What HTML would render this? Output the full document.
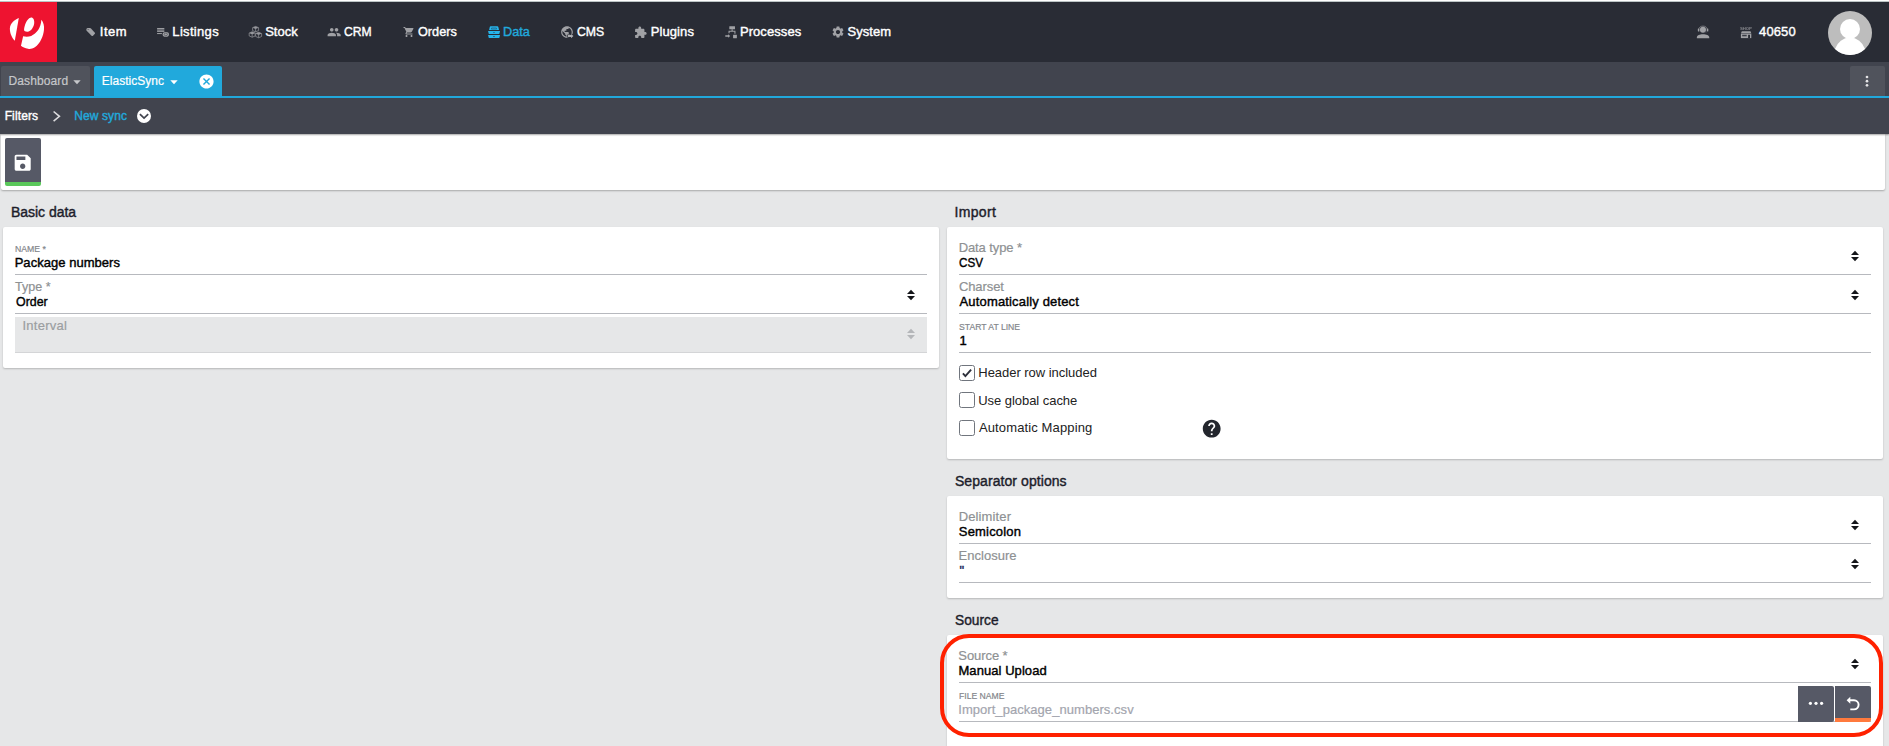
<!DOCTYPE html>
<html lang="en">
<head>
<meta charset="utf-8">
<title>ElasticSync</title>
<style>
*{box-sizing:border-box;margin:0;padding:0}
html,body{width:1889px;height:746px;overflow:hidden}
body{background:#e6e7e8;font-family:"Liberation Sans",sans-serif;color:#000;position:relative;font-size:13px}
.abs,.t,svg{position:absolute}
.t{white-space:nowrap;line-height:20px;height:20px}
#topstrip{left:0;top:0;width:1889px;height:2px;background:linear-gradient(#fff 0,#fff 50%,#bcc4c5 50%,#bcc4c5 100%)}
#header{left:0;top:2px;width:1889px;height:60px;background:#292c35}
#logo{left:0;top:2px;width:57px;height:60px;background:#ee1330}
#tabbar{left:0;top:62px;width:1889px;height:36px;background:#41444e}
#blueline{left:0;top:96px;width:1889px;height:2px;background:#21a9dc}
.tab{top:66px;height:30px;border-radius:2px 2px 0 0}
#crumbs{left:0;top:98px;width:1889px;height:35.5px;background:#41444e;box-shadow:0 1px 1.5px rgba(0,0,0,.35)}
#toolbar{left:1px;top:134px;width:1884px;height:56px;background:#fff;box-shadow:0 1px 2px rgba(0,0,0,.28);border-radius:0 0 2px 2px}
.card{background:#fff;border-radius:2px;box-shadow:0 1px 2px rgba(0,0,0,.21)}
.line{height:1px;background:#b7b9be}
.cb{width:16px;height:16px;border:1px solid #70757d;border-radius:2.5px;background:#fff}
.btn{background:#565966;border-radius:2px}
</style>
</head>
<body>
<div class="abs" id="header"></div>
<div class="abs" id="topstrip"></div>
<div class="abs" id="logo"></div>
<div class="abs" id="tabbar"></div>
<div class="abs tab" style="left:1px;width:89px;background:#50535c"></div>
<div class="abs tab" style="left:94px;width:128px;background:#21a9dc"></div>
<div class="abs tab" style="left:1850px;width:35px;background:#50535c"></div>
<div class="abs" id="blueline"></div>
<div class="abs" id="toolbar"></div>
<div class="abs" id="crumbs"></div>
<div class="abs btn" id="savebtn" style="left:5px;top:138px;width:36px;height:48px;border-bottom:4px solid #5ac85a"></div>

<div class="abs card" style="left:3px;top:227px;width:936px;height:141px"></div>
<div class="abs line" style="left:15px;top:274px;width:912px"></div>
<div class="abs line" style="left:15px;top:313px;width:912px"></div>
<div class="abs" style="left:15px;top:317px;width:912px;height:36px;background:#e6e7e8;border-bottom:1px solid #d4d5d7"></div>

<div class="abs card" style="left:947px;top:227px;width:936px;height:232px"></div>
<div class="abs line" style="left:959px;top:274px;width:912px"></div>
<div class="abs line" style="left:959px;top:313px;width:912px"></div>
<div class="abs line" style="left:959px;top:352px;width:912px"></div>
<div class="abs cb" style="left:959px;top:365px"></div>
<div class="abs cb" style="left:959px;top:392px"></div>
<div class="abs cb" style="left:959px;top:420px"></div>

<div class="abs card" style="left:947px;top:496px;width:936px;height:102px"></div>
<div class="abs line" style="left:959px;top:543px;width:912px"></div>
<div class="abs line" style="left:959px;top:582px;width:912px"></div>

<div class="abs card" style="left:947px;top:635px;width:936px;height:130px"></div>
<div class="abs line" style="left:959px;top:682px;width:912px"></div>
<div class="abs line" style="left:959px;top:721px;width:912px"></div>
<div class="abs btn" style="left:1798px;top:686px;width:36px;height:36px;border-radius:0 2px 2px 0"></div>
<div class="abs btn" style="left:1835px;top:686px;width:36px;height:36px;border-radius:0 2px 2px 0;border-bottom:4px solid #ff7a3d"></div>
<div class="abs" style="left:940px;top:634px;width:943px;height:103px;border:4px solid #ff2100;border-radius:29px"></div>
<!-- logo -->
<svg style="left:4px;top:10px" width="48" height="46" viewBox="0 0 778 746"><g fill="#fff">
<path d="M240,130 C170,160 95,220 95,300 C95,390 130,450 175,500 Z"/>
<path d="M430,125 C470,115 495,160 490,210 C485,270 440,350 380,352 C350,353 325,345 325,320 C330,250 370,140 430,125 Z"/>
<path d="M605,160 C640,200 655,260 648,320 C640,420 590,540 500,605 C460,630 420,635 390,628 C340,618 300,600 275,578 L310,425 C350,435 400,435 440,420 C530,385 600,290 605,160 Z"/>
</g></svg>
<!-- Item tag -->
<svg style="left:82px;top:22px" width="20" height="20" viewBox="0 0 746 746"><path fill="#a0a1a5" d="M175,240 Q185,225 210,225 L300,225 Q320,225 335,240 L480,400 Q495,420 480,440 L410,515 Q390,530 365,520 L175,330 Q160,315 160,290 Z"/><ellipse cx="228" cy="272" rx="28" ry="14" fill="#3a3d46"/></svg>
<!-- Listings -->
<svg style="left:152px;top:22px" width="20" height="20" viewBox="0 0 746 746"><g fill="#a0a1a5"><rect x="190" y="225" width="270" height="40" /><rect x="190" y="265" width="270" height="70" fill="#6d6f75"/><rect x="190" y="330" width="270" height="38"/><rect x="190" y="412" width="180" height="38"/><ellipse cx="515" cy="462" rx="118" ry="85"/></g><ellipse cx="515" cy="462" rx="62" ry="48" fill="none" stroke="#50535b" stroke-width="26"/></svg>
<!-- Stock cubes -->
<svg style="left:245px;top:22px" width="20" height="20" viewBox="0 0 746 746"><path d="M268,364 L380,410 L380,520 L268,568 L156,520 L156,410 Z" fill="#292c35"/><path d="M268,364 L380,410 L380,520 L268,568 L156,520 L156,410 Z M268,462 L268,568" fill="none" stroke="#8f9095" stroke-width="28" stroke-linejoin="miter"/><path d="M268,364 L380,410 L268,462 L156,410 Z" fill="#97989d"/><path d="M508,384 L620,430 L620,540 L508,588 L396,540 L396,430 Z" fill="#292c35"/><path d="M508,384 L620,430 L620,540 L508,588 L396,540 L396,430 Z M508,482 L508,588" fill="none" stroke="#8f9095" stroke-width="28" stroke-linejoin="miter"/><path d="M508,384 L620,430 L508,482 L396,430 Z" fill="#97989d"/><path d="M395,164 L507,210 L507,320 L395,368 L283,320 L283,210 Z" fill="#292c35"/><path d="M395,164 L507,210 L507,320 L395,368 L283,320 L283,210 Z M395,262 L395,368" fill="none" stroke="#8f9095" stroke-width="28" stroke-linejoin="miter"/><path d="M395,164 L507,210 L395,262 L283,210 Z" fill="#97989d"/></svg>
<!-- CRM people -->
<svg style="left:327.300px;top:25.300px" width="14.300" height="14.300" viewBox="0 0 24 24"><path fill="#a0a1a5" d="M16 11c1.660 0 2.990-1.340 2.990-3S17.660 5 16 5c-1.660 0-3 1.340-3 3s1.340 3 3 3zm-8 0c1.660 0 2.990-1.340 2.990-3S9.660 5 8 5C6.340 5 5 6.340 5 8s1.340 3 3 3zm0 2c-2.330 0-7 1.170-7 3.500V19h14v-2.500c0-2.330-4.670-3.500-7-3.500zm8 0c-.29 0-.62.020-.97.050 1.160.84 1.970 1.970 1.970 3.450V19h6v-2.500c0-2.330-4.670-3.500-7-3.500z"/></svg>
<!-- Orders cart -->
<svg style="left:403.400px;top:25.900px" width="12" height="12" viewBox="0 0 24 24"><path fill="#a0a1a5" d="M7 18c-1.100 0-1.990.9-1.990 2S5.900 22 7 22s2-.9 2-2-.9-2-2-2zM1 2v2h2l3.600 7.590-1.350 2.450c-.16.280-.25.610-.25.960 0 1.100.9 2 2 2h12v-2H7.420c-.14 0-.25-.11-.25-.25l.03-.12.900-1.630h7.450c.75 0 1.410-.41 1.750-1.030l3.580-6.490c.08-.14.120-.31.120-.48 0-.55-.45-1-1-1H5.210l-.94-2H1zm16 16c-1.100 0-1.990.9-1.990 2s.89 2 1.990 2 2-.9 2-2-.9-2-2-2z"/></svg>
<!-- Data drawers -->
<svg style="left:484px;top:22px" width="20" height="20" viewBox="0 0 746 746"><g fill="#27b4ea">
<path d="M245,155 H500 Q525,155 535,185 L560,295 H190 L215,185 Q222,155 245,155 Z"/>
<path d="M150,335 H600 L570,445 H180 Z"/><path d="M150,482 H600 L570,600 H180 Z"/></g>
<path d="M290,200 H455 L470,290 H275 Z" fill="#2287b3"/>
<ellipse cx="282" cy="245" rx="14" ry="26" fill="#1d5a78"/><ellipse cx="462" cy="245" rx="14" ry="26" fill="#1d5a78"/>
<ellipse cx="372" cy="389" rx="38" ry="15" fill="#1e4f68"/><ellipse cx="372" cy="541" rx="38" ry="15" fill="#1e4f68"/></svg>
<!-- CMS globe -->
<svg style="left:560px;top:24.900px" width="14" height="14" viewBox="0 0 24 24"><path fill="#a0a1a5" d="M12 2C6.480 2 2 6.480 2 12s4.480 10 10 10 10-4.480 10-10S17.520 2 12 2zm-1 17.930c-3.950-.49-7-3.850-7-7.930 0-.62.080-1.210.21-1.790L9 15v1c0 1.100.9 2 2 2v1.930zm6.900-2.540c-.26-.81-1-1.390-1.900-1.390h-1v-3c0-.55-.45-1-1-1H8v-2h2c.55 0 1-.45 1-1V7h2c1.100 0 2-.9 2-2v-.41c2.930 1.190 5 4.060 5 7.410 0 2.080-.8 3.970-2.100 5.390z"/></svg>
<svg style="left:557px;top:22px" width="20" height="20" viewBox="0 0 746 746"><path d="M385,462 H510 V415 L650,525 L510,635 V590 H385 Z" fill="#292c35"/><path d="M410,488 H522 V448 L615,525 L522,602 V562 H410 Z" fill="#abacb0"/></svg>
<!-- Plugins -->
<svg style="left:634.200px;top:26.300px" width="13.200" height="13.200" viewBox="0 0 24 24"><path fill="#a0a1a5" d="M20.500 11H19V7c0-1.100-.9-2-2-2h-4V3.500C13 2.120 11.880 1 10.500 1S8 2.120 8 3.500V5H4c-1.100 0-1.990.9-1.990 2v3.800H3.500c1.490 0 2.700 1.210 2.700 2.700s-1.210 2.700-2.700 2.700H2V20c0 1.100.9 2 2 2h3.800v-1.500c0-1.490 1.210-2.700 2.700-2.700 1.490 0 2.700 1.210 2.700 2.700V22H17c1.100 0 2-.9 2-2v-4h1.500c1.380 0 2.500-1.120 2.500-2.500S21.880 11 20.500 11z"/></svg>
<!-- Processes -->
<svg style="left:721px;top:22px" width="20" height="20" viewBox="0 0 746 746"><g fill="#a0a1a5"><rect x="310" y="155" width="212" height="115" rx="12"/><rect x="450" y="480" width="142" height="122" rx="10"/><path d="M160,490 H262 V455 L345,520 L262,585 V550 H160 Z"/></g>
<path d="M415,270 V345 M300,415 V345 H520 V440" fill="none" stroke="#a0a1a5" stroke-width="40"/></svg>
<!-- System gear -->
<svg style="left:830.900px;top:25px" width="14" height="14" viewBox="0 0 24 24"><path fill="#a0a1a5" d="M19.140 12.940c.04-.3.060-.61.060-.94 0-.32-.02-.64-.07-.94l2.030-1.580c.18-.14.230-.41.120-.61l-1.920-3.320c-.12-.22-.37-.29-.59-.22l-2.390.96c-.5-.38-1.030-.7-1.620-.94l-.36-2.540c-.04-.24-.24-.41-.48-.41h-3.840c-.24 0-.43.170-.47.410l-.36 2.540c-.59.240-1.130.57-1.620.94l-2.390-.96c-.22-.08-.47 0-.59.220L2.740 8.870c-.12.210-.08.470.12.610l2.030 1.580c-.05.300-.09.630-.09.940s.02.640.07.940l-2.030 1.580c-.18.140-.23.410-.12.610l1.920 3.320c.12.220.37.290.59.220l2.390-.96c.5.380 1.030.7 1.620.94l.36 2.540c.05.240.24.410.48.410h3.840c.24 0 .44-.17.470-.41l.36-2.540c.59-.24 1.130-.56 1.620-.94l2.390.96c.22.080.47 0 .59-.22l1.920-3.320c.12-.22.070-.47-.12-.61l-2.010-1.580zM12 15.600c-1.980 0-3.600-1.620-3.600-3.600s1.620-3.600 3.600-3.600 3.600 1.620 3.600 3.600-1.620 3.600-3.600 3.600z"/></svg>
<!-- support -->
<svg style="left:1690px;top:20px" width="26" height="24" viewBox="0 0 702 648"><g fill="#a0a1a5"><circle cx="350" cy="265" r="82"/><rect x="212" y="232" width="42" height="80" rx="14"/><rect x="452" y="232" width="42" height="80" rx="14"/><path d="M185,495 V470 C185,415 260,385 350,385 C440,385 520,415 520,470 V495 Z"/></g><path d="M240,240 C250,140 450,140 462,240" fill="none" stroke="#85868b" stroke-width="22"/><path d="M470,300 C470,330 430,335 385,333" fill="none" stroke="#50525a" stroke-width="18"/></svg>
<!-- shop -->
<svg style="left:1738px;top:24px;will-change:transform" width="16" height="16" viewBox="0 0 16 16"><text x="2.100" y="6.250" font-family="Liberation Sans, sans-serif" font-size="4.300" font-weight="bold" fill="#85868b" letter-spacing="-.1">SHOP</text><g fill="#a0a1a5"><path d="M3.800,7.300 H12.500 L13.400,9.500 H2.900 Z"/><rect x="2.900" y="9.900" width="10.400" height="4.200"/></g><rect x="4.200" y="10.800" width="4.500" height="1.500" fill="#3a3d46"/><rect x="10.100" y="10.800" width="1.900" height="3.300" fill="#292c35"/></svg>
<!-- avatar -->
<svg style="left:1828px;top:11px" width="44" height="44" viewBox="0 0 44 44"><circle cx="22" cy="22" r="22" fill="#bdbdbd"/><g fill="#fff"><circle cx="22" cy="18" r="10"/><path d="M6.95,38.05 A16,17.5 0 0 1 37.05,38.05 A22,22 0 0 1 6.95,38.05 Z"/></g></svg>
<!-- tab arrows -->
<svg style="left:73.200px;top:80px" width="8" height="5" viewBox="0 0 8 5"><path d="M0.300,0.300 H7.700 L4,4.300 Z" fill="#c6c7ca"/></svg>
<svg style="left:170.200px;top:80px" width="8" height="5" viewBox="0 0 8 5"><path d="M0.300,0.300 H7.700 L4,4.300 Z" fill="#fff"/></svg>
<!-- tab close -->
<svg style="left:197.700px;top:73.300px" width="17" height="17" viewBox="0 0 24 24"><path fill="#fff" d="M12 2C6.470 2 2 6.470 2 12s4.470 10 10 10 10-4.470 10-10S17.530 2 12 2zm5 13.590L15.590 17 12 13.410 8.410 17 7 15.590 10.590 12 7 8.410 8.410 7 12 10.590 15.590 7 17 8.410 13.410 12 17 15.590z"/></svg>
<!-- kebab -->
<svg style="left:1862px;top:72px" width="10" height="18" viewBox="0 0 10 18"><g fill="#e4e4e6"><circle cx="5" cy="5" r="1.350"/><circle cx="5" cy="9.150" r="1.350"/><circle cx="5" cy="13.300" r="1.350"/></g></svg>
<!-- crumb chevron -->
<svg style="left:50px;top:108px" width="14" height="16" viewBox="0 0 14 16"><path d="M3.600,3.500 L9.400,8.300 L3.600,13.100" fill="none" stroke="#dcdcde" stroke-width="1.600"/></svg>
<!-- crumb circle chevron -->
<svg style="left:137.400px;top:109.200px" width="14" height="14" viewBox="0 0 14 14"><circle cx="7" cy="7" r="7" fill="#fff"/><path d="M2.900,5.100 L7.050,9.100 L11.200,5.100" fill="none" stroke="#41444e" stroke-width="1.700"/></svg>
<!-- save icon -->
<svg style="left:12.350px;top:151.600px" width="21.400" height="21.400" viewBox="0 0 24 24"><path fill="#fff" d="M17 3H5c-1.110 0-2 .9-2 2v14c0 1.100.89 2 2 2h14c1.100 0 2-.9 2-2V7l-4-4zm-5 16c-1.660 0-3-1.340-3-3s1.340-3 3-3 3 1.340 3 3-1.340 3-3 3zm3-10H5V5h10v4z"/></svg>
<!-- sort arrows -->
<svg class="sa" style="left:906px;top:289px" width="10" height="12" viewBox="0 0 10 12"><path d="M1,5 L5,0.800 L9,5 Z M1,7 L5,11.200 L9,7 Z" fill="#15161a"/></svg>
<svg class="sa" style="left:906px;top:328px" width="10" height="12" viewBox="0 0 10 12"><path d="M1,5 L5,0.800 L9,5 Z M1,7 L5,11.200 L9,7 Z" fill="#b4b6b9"/></svg>
<svg class="sa" style="left:1850px;top:250px" width="10" height="12" viewBox="0 0 10 12"><path d="M1,5 L5,0.800 L9,5 Z M1,7 L5,11.200 L9,7 Z" fill="#15161a"/></svg>
<svg class="sa" style="left:1850px;top:289px" width="10" height="12" viewBox="0 0 10 12"><path d="M1,5 L5,0.800 L9,5 Z M1,7 L5,11.200 L9,7 Z" fill="#15161a"/></svg>
<svg class="sa" style="left:1850px;top:519px" width="10" height="12" viewBox="0 0 10 12"><path d="M1,5 L5,0.800 L9,5 Z M1,7 L5,11.200 L9,7 Z" fill="#15161a"/></svg>
<svg class="sa" style="left:1850px;top:558px" width="10" height="12" viewBox="0 0 10 12"><path d="M1,5 L5,0.800 L9,5 Z M1,7 L5,11.200 L9,7 Z" fill="#15161a"/></svg>
<svg class="sa" style="left:1850px;top:658px" width="10" height="12" viewBox="0 0 10 12"><path d="M1,5 L5,0.800 L9,5 Z M1,7 L5,11.200 L9,7 Z" fill="#15161a"/></svg>
<!-- check -->
<svg style="left:961px;top:367px" width="12" height="12" viewBox="0 0 12 12"><path d="M1.900,6.400 L4.400,9.100 L10.100,2.700" fill="none" stroke="#2d303b" stroke-width="1.900"/></svg>
<!-- help -->
<svg style="left:1201.250px;top:418.050px" width="21.400" height="21.400" viewBox="0 0 24 24"><path fill="#23262d" d="M12 2C6.480 2 2 6.480 2 12s4.480 10 10 10 10-4.480 10-10S17.520 2 12 2zm1 17h-2v-2h2v2zm2.070-7.750l-.9.920C13.450 12.900 13 13.500 13 15h-2v-.5c0-1.100.45-2.100 1.170-2.830l1.240-1.260c.37-.36.590-.86.590-1.410 0-1.100-.9-2-2-2s-2 .9-2 2H8c0-2.210 1.790-4 4-4s4 1.790 4 4c0 .88-.36 1.680-.93 2.250z"/></svg>
<!-- more dots -->
<svg style="left:1806px;top:699px" width="20" height="8" viewBox="0 0 20 8"><g fill="#fff"><circle cx="4.400" cy="4.300" r="1.600"/><circle cx="10" cy="4.300" r="1.600"/><circle cx="15.600" cy="4.300" r="1.600"/></g></svg>
<!-- undo -->
<svg style="left:1843px;top:693.500px" width="20" height="20" viewBox="0 0 20 20"><path d="M5.500,6.200 H11 A4.600,4.600 0 0 1 11,15.400 H7.300" fill="none" stroke="#fff" stroke-width="1.900"/><path d="M7.300,2.800 L3.600,6.200 L7.300,9.700 Z" fill="#fff"/></svg>
<span class="t" style="left:99.86px;top:22px;line-height:19px;height:19px;font-size:13px;letter-spacing:0.491px;color:#fff;-webkit-text-stroke:0.4px currentColor;">Item</span>
<span class="t" style="left:172.33px;top:22px;line-height:19px;height:19px;font-size:13px;letter-spacing:0.323px;color:#fff;-webkit-text-stroke:0.4px currentColor;">Listings</span>
<span class="t" style="left:265.17px;top:22px;line-height:19px;height:19px;font-size:13px;letter-spacing:0.027px;color:#fff;-webkit-text-stroke:0.4px currentColor;">Stock</span>
<span class="t" style="left:343.99px;top:22px;line-height:19px;height:19px;font-size:13px;letter-spacing:0.000px;color:#fff;-webkit-text-stroke:0.4px currentColor;transform:scaleX(0.9343);transform-origin:0 0;">CRM</span>
<span class="t" style="left:418.24px;top:22px;line-height:19px;height:19px;font-size:13px;letter-spacing:0.000px;color:#fff;-webkit-text-stroke:0.4px currentColor;transform:scaleX(0.9749);transform-origin:0 0;">Orders</span>
<span class="t" style="left:503.17px;top:22px;line-height:19px;height:19px;font-size:13px;letter-spacing:0.000px;color:#21a9dc;-webkit-text-stroke:0.4px currentColor;transform:scaleX(0.9782);transform-origin:0 0;">Data</span>
<span class="t" style="left:576.97px;top:22px;line-height:19px;height:19px;font-size:13px;letter-spacing:0.000px;color:#fff;-webkit-text-stroke:0.4px currentColor;transform:scaleX(0.9405);transform-origin:0 0;">CMS</span>
<span class="t" style="left:650.64px;top:22px;line-height:19px;height:19px;font-size:13px;letter-spacing:0.116px;color:#fff;-webkit-text-stroke:0.4px currentColor;">Plugins</span>
<span class="t" style="left:739.88px;top:22px;line-height:19px;height:19px;font-size:13px;letter-spacing:0.089px;color:#fff;-webkit-text-stroke:0.4px currentColor;">Processes</span>
<span class="t" style="left:847.39px;top:22px;line-height:19px;height:19px;font-size:13px;letter-spacing:0.088px;color:#fff;-webkit-text-stroke:0.4px currentColor;">System</span>
<span class="t" style="left:1759.10px;top:22px;line-height:19px;height:19px;font-size:13px;letter-spacing:0.103px;color:#fff;-webkit-text-stroke:0.4px currentColor;">40650</span>
<span class="t" style="left:8.51px;top:72px;line-height:18px;height:18px;font-size:12px;letter-spacing:0.110px;color:#c6c7ca;-webkit-text-stroke:0.2px currentColor;">Dashboard</span>
<span class="t" style="left:101.83px;top:72px;line-height:18px;height:18px;font-size:12px;letter-spacing:0.011px;color:#fff;-webkit-text-stroke:0.2px currentColor;">ElasticSync</span>
<span class="t" style="left:4.63px;top:107px;line-height:18px;height:18px;font-size:12px;letter-spacing:0.128px;color:#fff;-webkit-text-stroke:0.4px currentColor;">Filters</span>
<span class="t" style="left:74.35px;top:107px;line-height:18px;height:18px;font-size:12px;letter-spacing:0.085px;color:#21a9dc;-webkit-text-stroke:0.4px currentColor;">New sync</span>
<span class="t" style="left:10.93px;top:202px;line-height:20px;height:20px;font-size:14px;letter-spacing:-0.028px;color:#1d1d2b;-webkit-text-stroke:0.4px currentColor;">Basic data</span>
<span class="t" style="left:954.41px;top:202px;line-height:20px;height:20px;font-size:14px;letter-spacing:0.349px;color:#1d1d2b;-webkit-text-stroke:0.4px currentColor;">Import</span>
<span class="t" style="left:954.95px;top:471px;line-height:20px;height:20px;font-size:14px;letter-spacing:0.072px;color:#1d1d2b;-webkit-text-stroke:0.4px currentColor;">Separator options</span>
<span class="t" style="left:954.78px;top:610px;line-height:20px;height:20px;font-size:14px;letter-spacing:0.000px;color:#1d1d2b;-webkit-text-stroke:0.4px currentColor;transform:scaleX(0.9813);transform-origin:0 0;">Source</span>
<span class="t" style="left:14.80px;top:241px;line-height:15px;height:15px;font-size:9.5px;letter-spacing:0.000px;color:#83868b;-webkit-text-stroke:0.2px currentColor;transform:scaleX(0.9135);transform-origin:0 0;">NAME *</span>
<span class="t" style="left:14.67px;top:253px;line-height:19px;height:19px;font-size:13px;letter-spacing:0.034px;color:#000;-webkit-text-stroke:0.4px currentColor;">Package numbers</span>
<span class="t" style="left:15.21px;top:277px;line-height:19px;height:19px;font-size:13px;letter-spacing:0.000px;color:#8e9193;-webkit-text-stroke:0.2px currentColor;transform:scaleX(0.9635);transform-origin:0 0;">Type *</span>
<span class="t" style="left:15.56px;top:292px;line-height:19px;height:19px;font-size:13px;letter-spacing:0.000px;color:#000;-webkit-text-stroke:0.4px currentColor;transform:scaleX(0.9527);transform-origin:0 0;">Order</span>
<span class="t" style="left:22.42px;top:316px;line-height:19px;height:19px;font-size:13px;letter-spacing:0.274px;color:#9b9ea1;-webkit-text-stroke:0.2px currentColor;">Interval</span>
<span class="t" style="left:958.67px;top:238px;line-height:19px;height:19px;font-size:13px;letter-spacing:-0.088px;color:#8e9193;-webkit-text-stroke:0.2px currentColor;">Data type *</span>
<span class="t" style="left:959.45px;top:253px;line-height:19px;height:19px;font-size:13px;letter-spacing:0.000px;color:#000;-webkit-text-stroke:0.4px currentColor;transform:scaleX(0.8976);transform-origin:0 0;">CSV</span>
<span class="t" style="left:958.91px;top:277px;line-height:19px;height:19px;font-size:13px;letter-spacing:-0.090px;color:#8e9193;-webkit-text-stroke:0.2px currentColor;">Charset</span>
<span class="t" style="left:959.56px;top:292px;line-height:19px;height:19px;font-size:13px;letter-spacing:0.155px;color:#000;-webkit-text-stroke:0.4px currentColor;">Automatically detect</span>
<span class="t" style="left:958.74px;top:319px;line-height:15px;height:15px;font-size:9.5px;letter-spacing:0.000px;color:#83868b;-webkit-text-stroke:0.2px currentColor;transform:scaleX(0.9085);transform-origin:0 0;">START AT LINE</span>
<span class="t" style="left:959.50px;top:331px;line-height:19px;height:19px;font-size:13px;letter-spacing:0.000px;color:#000;-webkit-text-stroke:0.4px currentColor;">1</span>
<span class="t" style="left:978.31px;top:363px;line-height:19px;height:19px;font-size:13px;letter-spacing:-0.037px;color:#222;">Header row included</span>
<span class="t" style="left:978.19px;top:391px;line-height:19px;height:19px;font-size:13px;letter-spacing:-0.042px;color:#222;">Use global cache</span>
<span class="t" style="left:978.94px;top:418px;line-height:19px;height:19px;font-size:13px;letter-spacing:0.126px;color:#222;">Automatic Mapping</span>
<span class="t" style="left:958.67px;top:507px;line-height:19px;height:19px;font-size:13px;letter-spacing:0.137px;color:#8e9193;-webkit-text-stroke:0.2px currentColor;">Delimiter</span>
<span class="t" style="left:958.85px;top:522px;line-height:19px;height:19px;font-size:13px;letter-spacing:0.171px;color:#000;-webkit-text-stroke:0.4px currentColor;">Semicolon</span>
<span class="t" style="left:958.54px;top:546px;line-height:19px;height:19px;font-size:13px;letter-spacing:0.016px;color:#8e9193;-webkit-text-stroke:0.2px currentColor;">Enclosure</span>
<span class="t" style="left:959.50px;top:561px;line-height:19px;height:19px;font-size:13px;letter-spacing:0.000px;color:#1a2a5a;-webkit-text-stroke:0.4px currentColor;">&quot;</span>
<span class="t" style="left:958.37px;top:646px;line-height:19px;height:19px;font-size:13px;letter-spacing:-0.081px;color:#8e9193;-webkit-text-stroke:0.2px currentColor;">Source *</span>
<span class="t" style="left:958.44px;top:661px;line-height:19px;height:19px;font-size:13px;letter-spacing:0.067px;color:#000;-webkit-text-stroke:0.4px currentColor;">Manual Upload</span>
<span class="t" style="left:958.69px;top:688px;line-height:15px;height:15px;font-size:9.5px;letter-spacing:0.000px;color:#83868b;-webkit-text-stroke:0.2px currentColor;transform:scaleX(0.9061);transform-origin:0 0;">FILE NAME</span>
<span class="t" style="left:958.22px;top:700px;line-height:19px;height:19px;font-size:13px;letter-spacing:0.051px;color:#a3a5ae;-webkit-text-stroke:0.2px currentColor;">Import_package_numbers.csv</span>
</body>
</html>
